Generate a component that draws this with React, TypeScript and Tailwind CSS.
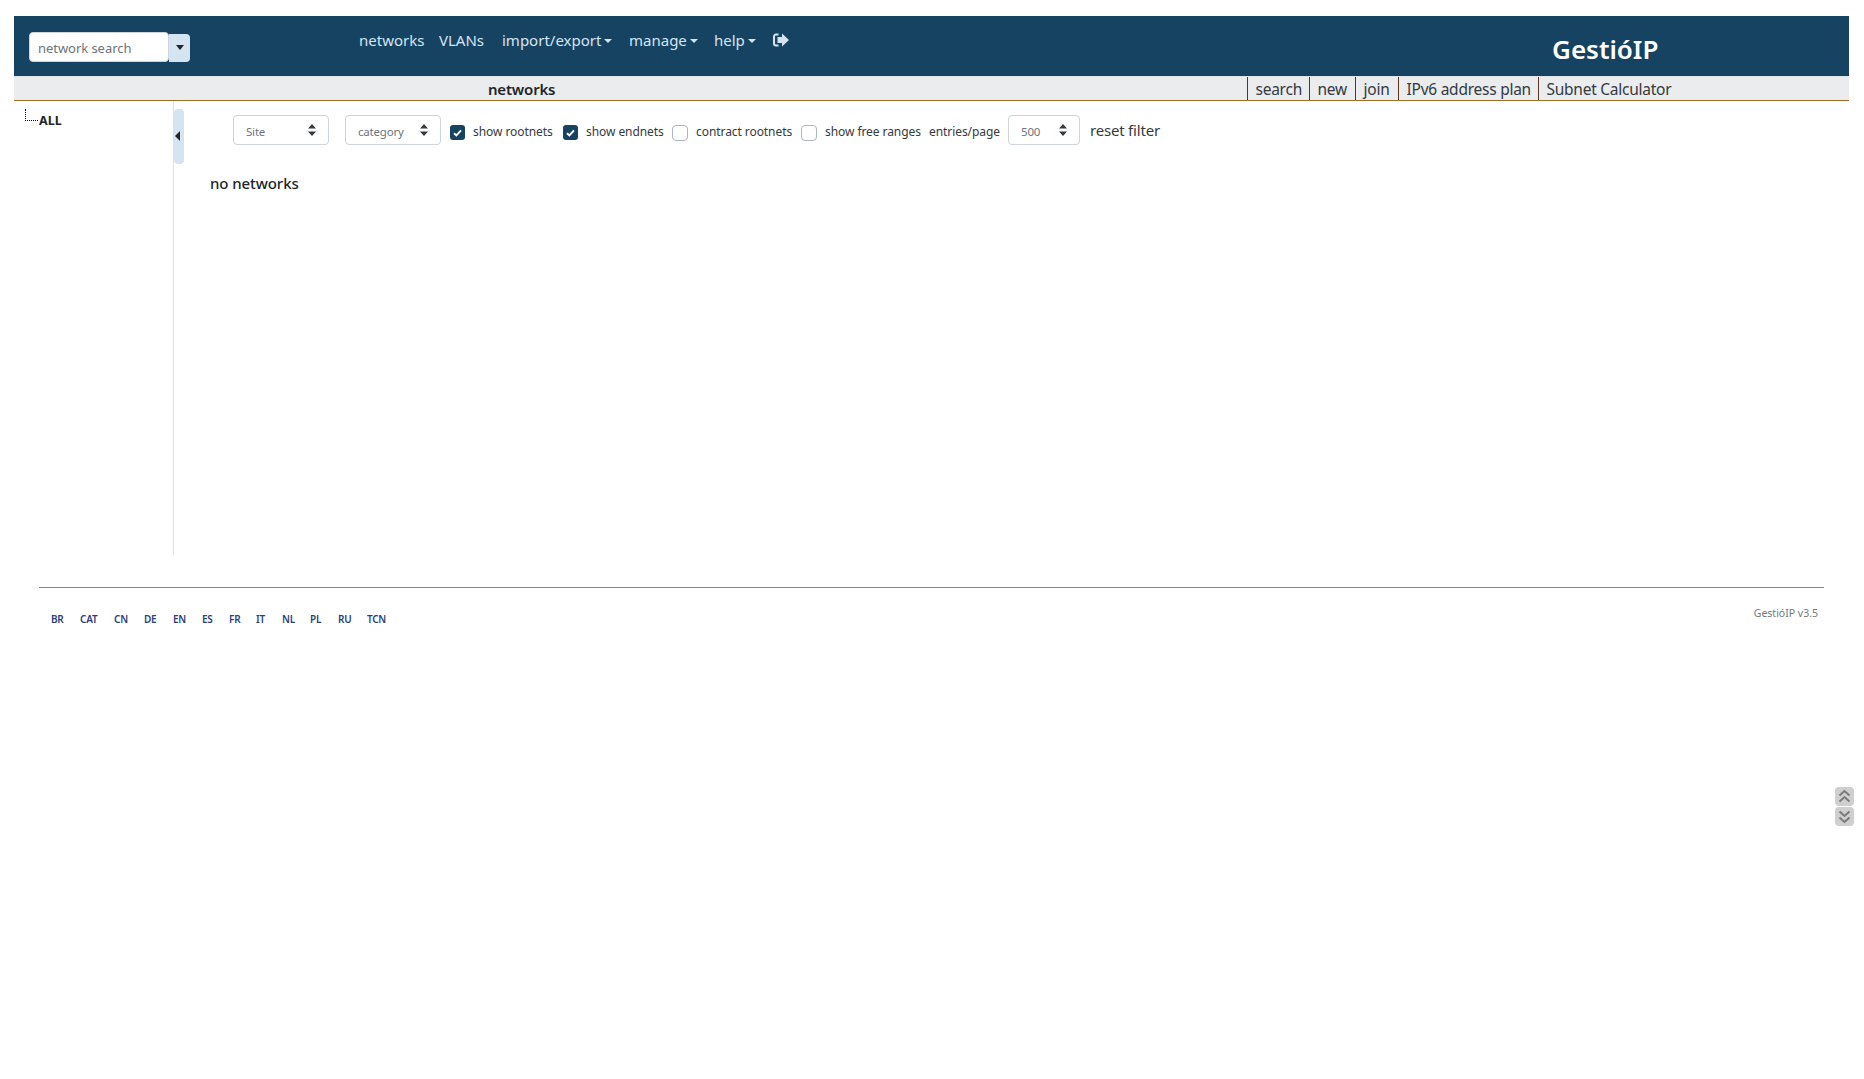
import React from "react";

const F = "font-['Noto_Sans','Open_Sans',sans-serif]";

function Caret({ className = "" }: { className?: string }) {
  return <span className={`inline-block w-0 h-0 border-x-[4.5px] border-x-transparent border-t-[4.5px] border-t-current ${className}`} />;
}

function NavItem({ label, w, caret }: { label: string; w: string; caret?: boolean }) {
  return (
    <div className={`flex items-center ${w} text-[15px] tracking-[0px] text-[#d4e5f1]`}>
      <span>{label}</span>
      {caret && <Caret className="ml-[3px] mt-[1px]" />}
    </div>
  );
}

function Sel({ label, w, ml }: { label: string; w: string; ml: string }) {
  return (
    <div className={`relative h-[30px] ${w} ${ml} shrink-0 flex items-center pl-[12px] border border-[#ced4da] rounded-[4px] text-[11.5px] text-[#6c757d] tracking-[-0.2px]`}>
      <span className="mt-[3px]">{label}</span>
      <svg className="absolute right-[12px] top-[8px]" width="8" height="12" viewBox="0 0 8 12">
        <path d="M4 0L8 4.5H0zM4 12L0 7.5H8z" fill="#343a40" />
      </svg>
    </div>
  );
}

function Check({ checked, ml }: { checked?: boolean; ml: string }) {
  return checked ? (
    <span className={`${ml} w-[15px] h-[15px] mt-[5px] shrink-0 rounded-[3px] bg-[#174363] flex items-center justify-center`}>
      <svg width="9" height="8" viewBox="0 0 9 8"><path d="M1 4.2L3.4 6.4L8 1.4" fill="none" stroke="#fff" strokeWidth="1.9" /></svg>
    </span>
  ) : (
    <span className={`${ml} w-[16px] h-[16px] mt-[6px] shrink-0 rounded-[4px] border border-[#adb5c2] bg-white`} />
  );
}

function Label({ text, w, ml }: { text: string; w: string; ml: string }) {
  return <span className={`${w} ${ml} mt-[4px] shrink-0 whitespace-nowrap text-[12px] tracking-[-0.07px] text-[#343a40]`}>{text}</span>;
}

const tabs: [string, string][] = [
  ["search", "w-[62px]"],
  ["new", "w-[46px]"],
  ["join", "w-[43px]"],
  ["IPv6 address plan", "w-[140px]"],
  ["Subnet Calculator", "w-[140px]"],
];

const langs: [string, string][] = [
  ["BR", "w-[29px]"], ["CAT", "w-[34px]"], ["CN", "w-[30px]"], ["DE", "w-[29px]"],
  ["EN", "w-[29px]"], ["ES", "w-[27px]"], ["FR", "w-[27px]"], ["IT", "w-[26px]"],
  ["NL", "w-[28px]"], ["PL", "w-[28px]"], ["RU", "w-[29px]"], ["TCN", "w-[30px]"],
];

export default function App() {
  return (
    <div className={`relative min-h-[1079px] bg-white pt-[16px] pl-[14px] pr-[15px] text-[#212529] ${F}`}>
      <header className="h-[60px] bg-[#174363] flex relative">
        <div className="flex items-start pl-[15px] pt-[16px] w-[345px] shrink-0">
          <div className="w-[140px] h-[30px] bg-white rounded-[4px] border border-[#ced4da] pl-[8px] pt-[4px] flex items-center text-[13px] tracking-[-0.05px] text-[#6c757d]">
            network search
          </div>
          <div className="w-[21px] h-[28px] mt-[2px] rounded-r-[4px] bg-[#d4e5f1] flex items-center justify-center text-[#212529]">
            <Caret className="border-t-[5px] -mt-[2px]" />
          </div>
        </div>
        <nav className="flex items-center h-[48px]">
          <NavItem label="networks" w="w-[80px]" />
          <NavItem label="VLANs" w="w-[63px]" />
          <NavItem label="import/export" w="w-[127px]" caret />
          <NavItem label="manage" w="w-[85px]" caret />
          <NavItem label="help" w="w-[59px]" caret />
          <svg width="16" height="14" viewBox="0 0 16 14">
            <path d="M5.5 1.5H3A2 2 0 0 0 1 3.5v7a2 2 0 0 0 2 2h2.5" fill="none" stroke="#d4e5f1" strokeWidth="2" />
            <path d="M9 0.5L16 7L9 13.5V10H4.5V4H9z" fill="#d4e5f1" />
          </svg>
        </nav>
        <div className="absolute left-[1538px] top-[15px] text-[26px] leading-[36px] font-semibold tracking-[0px] text-white">GestióIP</div>
      </header>

      <div className="h-[25px] bg-[#ebecee] border-t border-t-[#dfe3e6] border-b border-b-[#a26c24] flex">
        <div className="w-[474px] shrink-0" />
        <div className="w-[759px] shrink-0 text-[15px] font-semibold tracking-[-0.2px] pt-[1px] leading-[23px] text-[#212529]">networks</div>
        {tabs.map(([t, w]) => (
          <div key={t} className={`${w} shrink-0 border-l border-l-[#5a3420] pl-[7.5px] pt-[1px] text-[15.5px] tracking-[-0.25px] leading-[23px] whitespace-nowrap text-[#343a40]`}>{t}</div>
        ))}
      </div>

      <div className="flex h-[454px]">
        <div className="w-[159px] shrink-0 relative">
          <div className="absolute left-[11px] top-[8px] w-[13px] h-[12px] border-l border-b border-dotted border-black" />
          <div className="pl-[25px] pt-[11px] text-[12.5px] font-bold leading-[18px] text-[#212529]">ALL</div>
        </div>
        <div className="w-[1px] h-full bg-[#e0e0e0] shrink-0" />
        <div className="w-[10px] h-[55px] mt-[8px] rounded-[4px] bg-[#d4e5f1] shrink-0 flex items-center">
          <svg width="6" height="10" viewBox="0 0 6 10" className="ml-[1px] -mt-[2px]"><path d="M5 0V10L0 5z" fill="#212529" /></svg>
        </div>
        <div className="flex-1 pl-[26px]">
          <div className="flex items-center pt-[14px] ml-[23px]">
            <Sel label="Site" w="w-[96px]" ml="" />
            <Sel label="category" w="w-[96px]" ml="ml-[16px]" />
            <Check checked ml="ml-[9px]" />
            <Label text="show rootnets" w="w-[81px]" ml="ml-[8px]" />
            <Check checked ml="ml-[9px]" />
            <Label text="show endnets" w="w-[79px]" ml="ml-[8px]" />
            <Check ml="ml-[7px]" />
            <Label text="contract rootnets" w="w-[97px]" ml="ml-[8px]" />
            <Check ml="ml-[8px]" />
            <Label text="show free ranges" w="w-[96px]" ml="ml-[8px]" />
            <Label text="entries/page" w="w-[71px]" ml="ml-[8px]" />
            <Sel label="500" w="w-[72px]" ml="ml-[8px]" />
            <span className="ml-[10px] mt-[1px] text-[15px] tracking-[-0.2px] text-[#343a40]">reset filter</span>
          </div>
          <div className="pt-[26px] text-[15px] leading-[24px] font-medium tracking-[-0.08px] text-[#212529]">no networks</div>
        </div>
      </div>

      <div className="mt-[32px] mx-[25px] h-[1px] bg-[#858585]" />
      <div className="mx-[25px] flex justify-between pt-[17px]">
        <div className="flex pl-[12px] pt-[6px] text-[10px] leading-[16px] font-semibold tracking-[-0.25px] text-[#2a3f7c]">
          {langs.map(([l, w]) => <span key={l} className={`${w} shrink-0`}>{l}</span>)}
        </div>
        <div className="pr-[6px] text-[10.5px] leading-[16px] text-[#777]">GestióIP v3.5</div>
      </div>

      {[0, 1].map((i) => (
        <div key={i} className={`absolute left-[1835px] w-[19px] h-[19px] rounded-[4px] bg-[#cfcfcf] flex items-center justify-center ${i === 0 ? "top-[787px]" : "top-[807px]"}`}>
          <svg width="13" height="15" viewBox="0 0 13 15" className={i === 1 ? "rotate-180" : ""}>
            <path d="M1.5 6.5L6.5 2L11.5 6.5M1.5 12.5L6.5 8L11.5 12.5" fill="none" stroke="#7a7a7a" strokeWidth="2" />
          </svg>
        </div>
      ))}
    </div>
  );
}
